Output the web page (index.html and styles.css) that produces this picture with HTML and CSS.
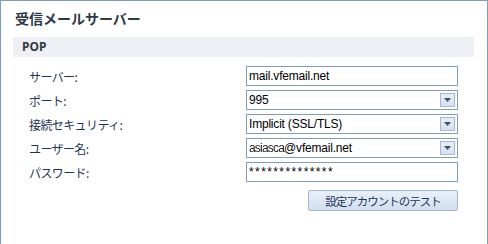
FILE: index.html
```html
<!DOCTYPE html>
<html lang="ja">
<head>
<meta charset="utf-8">
<title>受信メールサーバー</title>
<link rel="stylesheet" href="styles.css">
</head>
<body>
<div class="panel">
  <h1 class="title">受信メールサーバー</h1>
  <div class="band">POP</div>
  <div class="form">
    <label class="label">サーバー:</label>
    <div class="field"><span class="value">mail.vfemail.net</span></div>

    <label class="label">ポート:</label>
    <div class="field combo"><span class="value">995</span><span class="drop"><svg width="7" height="4" viewBox="0 0 7 4"><path d="M0 0H7L3.5 4Z" fill="#4a4f57"/></svg></span></div>

    <label class="label">接続セキュリティ:</label>
    <div class="field combo"><span class="value">Implicit (SSL/TLS)</span><span class="drop"><svg width="7" height="4" viewBox="0 0 7 4"><path d="M0 0H7L3.5 4Z" fill="#4a4f57"/></svg></span></div>

    <label class="label">ユーザー名:</label>
    <div class="field combo"><span class="value"><span class="masked">asiasca</span>@vfemail.net</span><span class="drop"><svg width="7" height="4" viewBox="0 0 7 4"><path d="M0 0H7L3.5 4Z" fill="#4a4f57"/></svg></span></div>

    <label class="label">パスワード:</label>
    <div class="field"><span class="value pw">**************</span></div>

    <div class="actions"><button class="btn">設定アカウントのテスト</button></div>
  </div>
</div>
</body>
</html>
```
FILE: styles.css
```css
html, body {
  margin: 0;
  padding: 0;
  background: #ffffff;
}
.panel {
  box-sizing: border-box;
  width: 488px;
  height: 244px;
  border: 1px solid #7f9dc0;
  border-bottom: none;
  font-family: "Noto Sans CJK JP", "Liberation Sans", sans-serif;
}
.title {
  margin: 0;
  height: 36px;
  padding: 0 0 0 14px;
  font-size: 14px;
  font-weight: bold;
  line-height: 34px;
  color: #2f3a47;
}
.band {
  margin: 0 13px 0 12px;
  height: 20px;
  padding-left: 9px;
  background: #eef0f5;
  font-family: "Noto Sans", "Liberation Sans", sans-serif;
  font-weight: bold;
  font-size: 12px;
  line-height: 20px;
  color: #333a44;
}
.form {
  display: grid;
  grid-template-columns: 217px 212px;
  grid-auto-rows: 20px;
  row-gap: 4px;
  margin-top: 9px;
  padding-left: 28px;
}
.label {
  display: flex;
  align-items: center;
  font-size: 12px;
  letter-spacing: -0.6px;
  color: #1f3556;
}
.field {
  box-sizing: border-box;
  display: flex;
  align-items: center;
  border: 1px solid #7f9db9;
  background: #fff;
  padding: 0 2px 0 2px;
  height: 20px;
}
.value {
  flex: 1;
  font-family: "Liberation Sans", sans-serif;
  font-size: 12px;
  letter-spacing: -0.2px;
  color: #000;
  white-space: nowrap;
}
.masked {
  display: inline-block;
  filter: blur(0.45px);
  letter-spacing: -0.8px;
  color: #222;
}
.pw {
  letter-spacing: 1.4px;
}
.drop {
  box-sizing: border-box;
  width: 15px;
  height: 14px;
  display: flex;
  align-items: center;
  justify-content: center;
  border: 1px solid #a8b9cf;
  background: linear-gradient(#e6eef9, #d3e0f1);
}
.actions {
  grid-column: 2;
  display: flex;
  justify-content: flex-end;
  margin-top: 4px;
  height: 21px;
}
.btn {
  box-sizing: border-box;
  width: 150px;
  height: 21px;
  margin: 0;
  padding: 0;
  border: 1px solid #a3b6cf;
  border-radius: 2px;
  background: linear-gradient(#e9f0f9, #d2dff0);
  font-family: "Noto Sans CJK JP", sans-serif;
  font-size: 11.5px;
  letter-spacing: -1px;
  color: #1e3556;
}
```
